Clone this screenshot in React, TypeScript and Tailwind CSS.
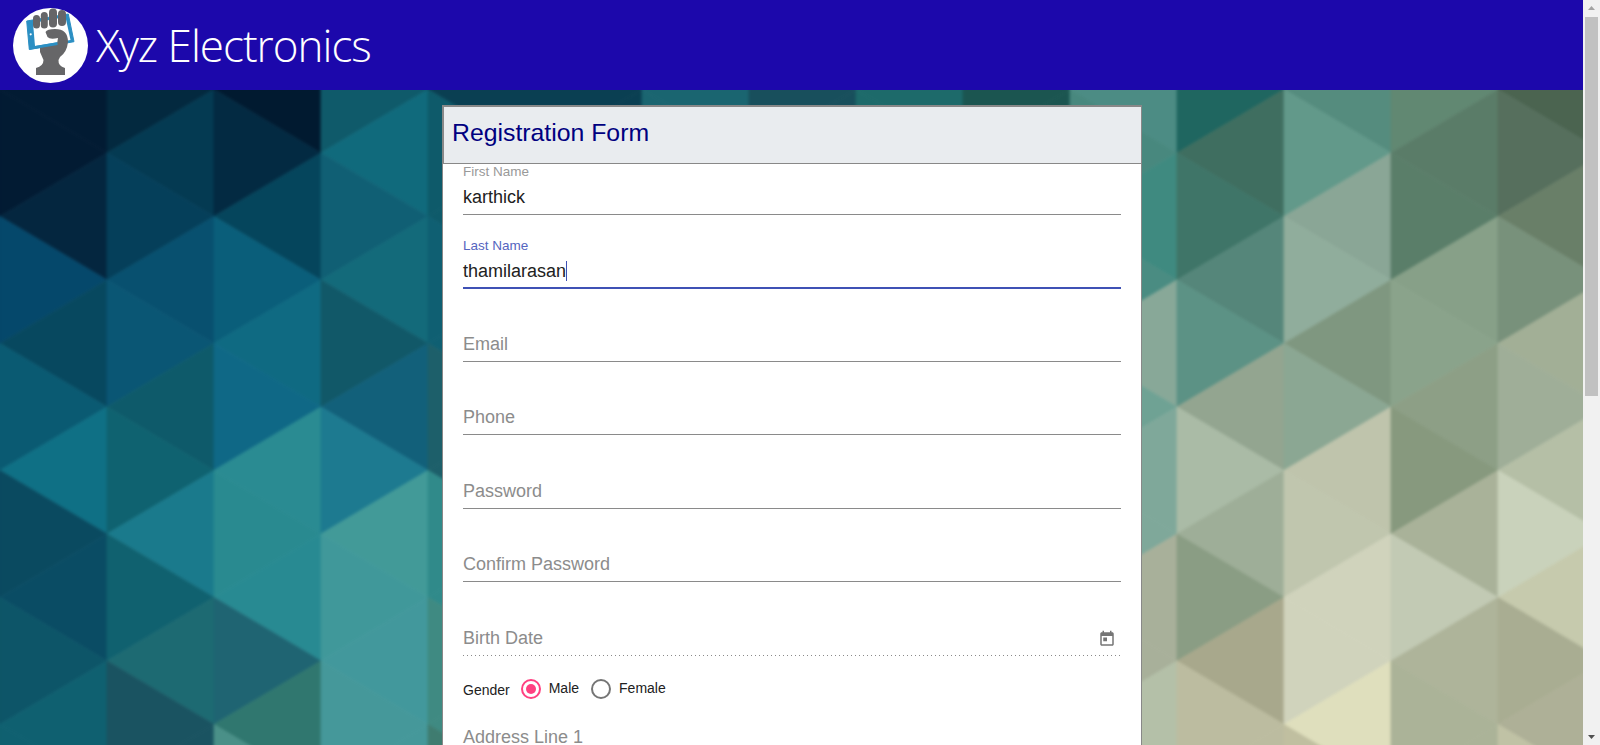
import React from "react";

const strips: string[][] = [
  ["#021b33","#021b33","#04263f","#05486b","#07485f","#0a5a72","#0f7085","#0a4a60","#0a4c64","#0d5568","#0f6070","#0f6070"],
  ["#03293f","#043a52","#053f5a","#08506f","#0a5674","#0e5a6a","#0f6270","#1a7a8c","#10616f","#1d6a72","#1a5361","#1a5361"],
  ["#011a30","#032a42","#05455c","#0a5e7a","#0f6a82","#0f6886","#2a8b92","#298a90","#288a92","#1f6472","#30776f","#4a9088"],
  ["#0f5a6a","#106a7c","#105f74","#136a7a","#115868","#12607a","#1d7a90","#429a98","#40989a","#42989c","#45989a","#45989a"],
  ["#0a3f52","#0e5a6a","#0e5a6a","#0f5f72","#0f5f72","#1d5f6a","#1d5f6a","#308a8a","#308a8a","#3f8a82","#3f8a82","#3f7c70"],
  ["#0a3f52","#0a3f52","#0a3f52","#0a3f52","#0a3f52","#0a3f52","#0a3f52","#0a3f52","#0a3f52","#0a3f52","#0a3f52","#0a3f52"],
  ["#1a6570","#1a6570","#1a6570","#1a6570","#1a6570","#1a6570","#1a6570","#1a6570","#1a6570","#1a6570","#1a6570","#1a6570"],
  ["#184f5c","#184f5c","#184f5c","#184f5c","#184f5c","#184f5c","#184f5c","#184f5c","#184f5c","#184f5c","#184f5c","#184f5c"],
  ["#1d6a6a","#1d6a6a","#1d6a6a","#1d6a6a","#1d6a6a","#1d6a6a","#1d6a6a","#1d6a6a","#1d6a6a","#1d6a6a","#1d6a6a","#1d6a6a"],
  ["#1b5550","#1b5550","#1b5550","#1b5550","#1b5550","#1b5550","#1b5550","#1b5550","#1b5550","#1b5550","#1b5550","#1b5550"],
  ["#4c8c84","#48887e","#3f8a80","#4a8c82","#88a898","#6fa294","#7fa89a","#7fa89a","#a8b09a","#a8b09a","#b4c0a8","#b4c0a8"],
  ["#1f6660","#3f6e60","#3f7568","#55867a","#5c9285","#93a590","#aabba6","#9eae98","#8a9d84","#a8a88c","#bcbca0","#bcbca0"],
  ["#558c7e","#62998a","#8aa696","#90ad9c","#7f9780","#8ba793","#bfc4ac","#c0c6ae","#d0d3bc","#d0d3bc","#dfdfbd","#c0bfa0"],
  ["#618872","#5a7c68","#5a7e69","#87a088","#8aa38b","#8d9f86","#87997e","#a9b299","#c2cab4","#aeb49a","#abb398","#abb398"],
  ["#4b6450","#566f5d","#697f68","#78917b","#a2af96","#9fae98","#b5bfa6","#c9d2bb","#c6caad","#a9ad92","#aeb097","#c0c2a5"],
];

const W = 107;
const STEP = 63.5;
const TOP = 90;

function triangles() {
  const out: { pts: string; fill: string }[] = [];
  strips.forEach((colors, c) => {
    const xl = c * W;
    const xr = xl + W;
    const leftEven = c % 2 === 0;
    [colors[0], ...colors].forEach((fill, i) => {
      const pts: string[] = [];
      const mirror: string[] = [];
      for (let v = 0; v < 3; v++) {
        const idx = i + v;
        const y = -37.5 + STEP * idx - TOP;
        const evenSide = idx % 2 === 0;
        const x = evenSide === leftEven ? xl : xr;
        pts.push(`${x},${y}`);
        mirror.push(`${-x},${y}`);
      }
      out.push({ pts: pts.join(" "), fill });
      if (c === 0) out.push({ pts: mirror.join(" "), fill });
    });
  });
  return out;
}

function Background() {
  return (
    <svg className="[grid-area:1/1] block w-[1583px] h-[655px]" viewBox="0 0 1583 655" aria-hidden="true">
      <g className="blur-[1.5px]">
        {triangles().map((t, i) => (
          <polygon key={i} points={t.pts} fill={t.fill} stroke={t.fill} strokeWidth={0.8} />
        ))}
      </g>
    </svg>
  );
}

function Logo() {
  return (
    <svg viewBox="13 8 75 75" className="block w-[75px] h-[75px] shrink-0" aria-hidden="true">
      <circle cx="50.5" cy="45.5" r="37.5" fill="#fff" />
      <polygon points="26.7,21 29.3,49.5 74,41.7 68.3,14" fill="#2b8fc3" stroke="#2b8fc3" strokeWidth="1" strokeLinejoin="round" />
      <polygon points="33,23 35,46 70.5,40 65.5,17" fill="#fff" />
      <circle cx="30.7" cy="34.3" r="1.1" fill="#fff" />
      <g fill="#666668">
        <rect x="33" y="15" width="7" height="13.5" rx="3.5" />
        <rect x="40.8" y="12" width="7" height="16.5" rx="3.5" />
        <rect x="49" y="8.5" width="8" height="19" rx="4" />
        <rect x="58" y="10" width="8" height="16" rx="4" />
        <path d="M45.5 32Q47 29 55 29Q68 29 68 42Q67 52 60 57L58.5 60Q58 66 65 68L65 75L36 75L36 68Q43.5 66 43.5 60L40 52L40 46L57 44L58 38Q50 40 47.5 37Z" />
      </g>
      <line x1="29.5" y1="48.4" x2="57.5" y2="43.6" stroke="#2b8fc3" strokeWidth="2.6" />
    </svg>
  );
}

type FieldProps = {
  label: string;
  value?: string;
  focused?: boolean;
  dotted?: boolean;
  first?: boolean;
  icon?: boolean;
  raised?: boolean;
};

function Field({ label, value, focused, dotted, first, icon, raised }: FieldProps) {
  const floating = value !== undefined;
  const height = first ? "h-[51px]" : focused ? "h-[74px] -mb-[0.6px]" : dotted ? "h-[74.4px]" : "h-[73.4px]";
  const rowPad = first || dotted || raised ? "pb-[5px]" : focused ? "pb-[3px]" : "pb-[4.4px]";
  return (
    <div className={`flex flex-col justify-end ${height}`}>
      {floating && (
        <div className={`text-[13.5px] leading-[16px] h-[16px] ${first ? "mb-[5px]" : "mb-[4px]"} ${focused ? "text-[#5565c0]" : "text-[#999999]"}`}>{label}</div>
      )}
      <div className={`flex items-center justify-between h-[29px] text-[18px] leading-[26px] ${rowPad}`}>
        {floating ? (
          <span className="flex items-center text-[#212121]">
            {value}
            {focused && <span className="inline-block w-px h-[20px] bg-[#3f51b5]" />}
          </span>
        ) : (
          <span className="text-[#8c8c8c]">{label}</span>
        )}
        {icon && (
          <svg viewBox="0 0 24 24" className="block w-[18px] h-[18px] mr-[5px] mt-[2px]" fill="#757575" aria-hidden="true">
            <path d="M19 3h-1V1h-2v2H8V1H6v2H5c-1.11 0-1.99.9-1.99 2L3 19c0 1.1.89 2 2 2h14c1.1 0 2-.9 2-2V5c0-1.1-.9-2-2-2zm0 16H5V8h14v11zM7 10h5v5H7z" />
          </svg>
        )}
      </div>
      <div
        className={
          focused
            ? "h-[2px] bg-[#3f51b5]"
            : dotted
              ? "h-px bg-[repeating-linear-gradient(to_right,#8a8a8a_0,#8a8a8a_1px,transparent_1px,transparent_4px)]"
              : "h-px bg-[#8a8a8a]"
        }
      />
    </div>
  );
}

function Radio({ checked, label }: { checked?: boolean; label: string }) {
  return (
    <div className="flex items-center">
      <span
        className={`flex items-center justify-center w-[20px] h-[20px] rounded-full border-2 ${checked ? "border-[#ff4081]" : "border-[#757575]"}`}
      >
        {checked && <span className="block w-[10px] h-[10px] rounded-full bg-[#ff4081]" />}
      </span>
      <span className="ml-[8px] -mt-[3px] text-[14px] leading-[16px] text-[#212121]">{label}</span>
    </div>
  );
}

export default function App() {
  return (
    <div className="flex w-[1600px] h-[745px] overflow-hidden bg-white font-['Liberation_Sans',Arial,sans-serif]">
      <div className="flex flex-col w-[1583px] h-[745px]">
        <header className="flex items-center h-[90px] shrink-0 bg-[#1c08ab] pl-[13px]">
          <Logo />
          <span className="ml-[8px] font-['Open_Sans',sans-serif] font-light text-[44px] tracking-[-1px] leading-[60px] text-white">
            Xyz Electronics
          </span>
        </header>
        <main className="grid h-[655px] overflow-hidden">
          <Background />
          <div className="[grid-area:1/1] pt-[15px] pl-[442px]">
            <section className="w-[700px]">
              <div className="flex items-center h-[59px] bg-[#e9ecef] border border-t-2 border-l-2 border-[#888] pl-[8px] pb-[4px] text-[24.8px] leading-[28px] text-[#000080]">
                Registration Form
              </div>
              <div className="bg-white border-x border-[#888] px-[20px] h-[581px]">
                <Field first label="First Name" value="karthick" />
                <Field focused label="Last Name" value="thamilarasan" />
                <Field label="Email" />
                <Field raised label="Phone" />
                <Field label="Password" />
                <Field label="Confirm Password" />
                <Field dotted icon label="Birth Date" />
                <div className="flex items-center h-[67.6px]">
                  <span className="text-[14px] leading-[16px] text-[#212121] mr-[11px]">Gender</span>
                  <div className="flex items-center gap-[12px] -mt-[2px]">
                    <Radio checked label="Male" />
                    <Radio label="Female" />
                  </div>
                </div>
                <div className="pt-[5px] text-[18px] leading-[16px] text-[#8c8c8c]">Address Line 1</div>
              </div>
            </section>
          </div>
        </main>
      </div>
      <aside className="flex flex-col items-center w-[17px] h-[745px] bg-[#f1f1f1]">
        <div className="flex items-center justify-center h-[17px] w-full">
          <svg viewBox="0 0 9 5" className="block w-[7px] h-[4px] -mt-[1px]" fill="#a3a3a3" aria-hidden="true">
            <polygon points="4.5,0 9,5 0,5" />
          </svg>
        </div>
        <div className="w-[13px] h-[379px] bg-[#c1c1c1]" />
        <div className="flex-1" />
        <div className="flex items-center justify-center h-[17px] w-full">
          <svg viewBox="0 0 9 5" className="block w-[7px] h-[4px]" fill="#505050" aria-hidden="true">
            <polygon points="0,0 9,0 4.5,5" />
          </svg>
        </div>
      </aside>
    </div>
  );
}
